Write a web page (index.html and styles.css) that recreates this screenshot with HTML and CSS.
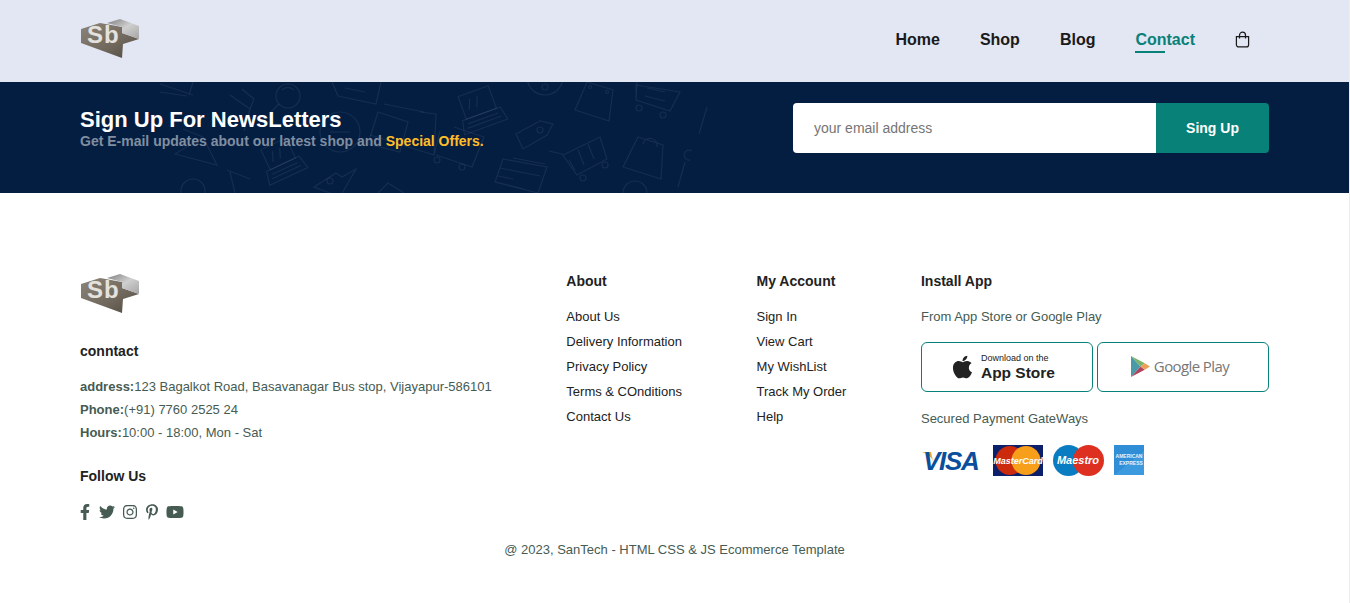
FILE: index.html
```html
<!DOCTYPE html>
<html lang="en">
<head>
    <meta charset="UTF-8">
    <meta name="viewport" content="width=device-width, initial-scale=1.0">
    <title>SanTech - Contact</title>
    <link rel="stylesheet" href="styles.css">
</head>
<body>
    <svg class="sprites" width="0" height="0" aria-hidden="true">
        <defs>
            <linearGradient id="logo-dark" x1="0" y1="0" x2="1" y2="1">
                <stop offset="0" stop-color="#8d8579"/>
                <stop offset="0.6" stop-color="#6f675b"/>
                <stop offset="1" stop-color="#4e473c"/>
            </linearGradient>
            <linearGradient id="logo-light" x1="0" y1="0" x2="1" y2="1">
                <stop offset="0" stop-color="#7d7d7d"/>
                <stop offset="0.5" stop-color="#cfcfcf"/>
                <stop offset="1" stop-color="#a5a5a5"/>
            </linearGradient>
            <symbol id="logo" viewBox="0 0 60 40">
                <polygon points="1,11 20,5 42,9 42,15 59,21 43,26 42,40 1,25" fill="url(#logo-dark)"/>
                <polygon points="27,5 40,1 59,8 59,21 42,15 42,9" fill="url(#logo-light)"/>
                <text class="logo-text" x="7" y="25">Sb</text>
            </symbol>
        </defs>
    </svg>

    <header class="topbar">
        <svg class="logo"><use href="#logo"/></svg>
        <nav class="nav">
            <a href="#">Home</a>
            <a href="#">Shop</a>
            <a href="#">Blog</a>
            <a href="#" class="active">Contact</a>
            <svg class="bag" viewBox="0 0 16 17" fill="none" stroke="#1a1a1a" stroke-width="1.3">
                <path d="M1.5 5.5h13v8.5a2.4 2.4 0 0 1-2.4 2.4H3.9A2.4 2.4 0 0 1 1.5 14z"/>
                <path d="M4.8 7.5V3.9a3.2 3.2 0 0 1 6.4 0v3.6"/>
            </svg>
        </nav>
    </header>

    <section class="newsletter">
        <svg class="pattern" viewBox="0 0 1349 111" aria-hidden="true">
            <g fill="none" stroke="#fff" stroke-opacity="0.07" stroke-width="1.2">
                <path d="M160 2l33 11M160 10l27 4M193 0l-4 13"/>
                <path d="M175 72l42 11-14-28zM203 55l-20-8"/>
                <path d="M230 13l20 14 4-10-12-10M250 27l-6 22"/>
                <path d="M181 111v-2a12 12 0 0 1 24 0v2M227 88l23 9M230 90l5 21"/>
                <circle cx="288" cy="14" r="12"/><path d="M279 22l-8 8M282 8a8 8 0 0 1 12 0"/>
                <circle cx="340" cy="50" r="20"/><path d="M330 50h20"/>
                <path d="M332 0l6 14 38 8 5-22M345 6l20 4"/>
                <path d="M378 30l30 10-8 30-32-8zM384 22l40 8"/>
                <g transform="rotate(-20 480 28)"><rect x="464" y="8" width="32" height="24"/><path d="M460 32h40l3 14h-46z"/><path d="M474 14l-4 10M482 14l-4 10M464 37h32M462 41h36"/></g>
                <g transform="rotate(-25 282 80)"><rect x="268" y="60" width="28" height="22"/><path d="M264 82h36l3 14h-42z"/><path d="M278 66l-4 10M286 66l-4 10M268 87h28M266 91h32"/></g>
                <path d="M314 105l22-14 6 4 14-8-8 14-8 14z"/><circle cx="330" cy="99" r="3"/>
                <path d="M370 53l64 20 6-24M420 30l16 2-2 41M378 111l10-10 16 10"/>
                <circle cx="437" cy="78" r="3"/><circle cx="462" cy="85" r="3"/>
                <path d="M436 73l36 12 12-30-30-10"/>
                <circle cx="545" cy="-5" r="18"/><circle cx="545" cy="5" r="3"/>
                <path d="M516 52l24-13 13 3-6 11-24 14z"/><circle cx="540" cy="48" r="3"/>
                <path d="M549 69l13 3 15 21 30-16-7-22-37 18M569 78l6 10M578 68l6 15M588 62l6 15"/>
                <circle cx="583" cy="96" r="3"/><circle cx="605" cy="83" r="3"/>
                <path d="M503 77l44 8-9 26-43-11zM513 76l32 6M500 86l40 8M498 94l15 3M496 100l28 7"/>
                <path d="M587 0l26 8-4 31-34-11z"/><circle cx="590" cy="5" r="1.5"/><circle cx="607" cy="10" r="1.5"/>
                <path d="M636 3l44 7-10 19-34-11zM637 0l-1 18M647 6l18 4M645 14l20 5"/>
                <circle cx="639" cy="26" r="3"/><circle cx="663" cy="33" r="3"/>
                <path d="M707 25l-8 27"/>
                <path d="M638 55l25 8-2 34-38-12zM643 62a7 7 0 0 1 14 3"/>
                <path d="M692 69a5 5 0 1 0-2 9M685 80l-7 25"/>
                <circle cx="635" cy="111" r="12"/>
            </g>
        </svg>
        <div class="newstext">
            <h4>Sign Up For NewsLetters</h4>
            <p>Get E-mail updates about our latest shop and <span>Special Offers.</span></p>
        </div>
        <form class="signup" onsubmit="return false">
            <input type="text" placeholder="your email address">
            <button type="submit">Sing Up</button>
        </form>
    </section>

    <footer class="footer">
        <div class="cols">
            <div class="col col-contact">
                <svg class="logo footer-logo"><use href="#logo"/></svg>
                <h4>conntact</h4>
                <p><strong>address:</strong>123 Bagalkot Road, Basavanagar Bus stop, Vijayapur-586101</p>
                <p><strong>Phone:</strong>(+91) 7760 2525 24</p>
                <p><strong>Hours:</strong>10:00 - 18:00, Mon - Sat</p>
                <h4 class="follow-title">Follow Us</h4>
                <div class="social">
                    <svg viewBox="0 0 320 512" class="ic-f"><path d="M279.14 288l14.22-92.66h-88.91v-60.13c0-25.35 12.42-50.06 52.24-50.06h40.42V6.26S260.43 0 225.36 0c-73.22 0-121.08 44.38-121.08 124.72v70.62H22.89V288h81.39v224h100.17V288z"/></svg>
                    <svg viewBox="0 0 512 512" class="ic-t"><path d="M459.37 151.716c.325 4.548.325 9.097.325 13.645 0 138.72-105.583 298.558-298.558 298.558-59.452 0-114.68-17.219-161.137-47.106 8.447.974 16.568 1.299 25.34 1.299 49.055 0 94.213-16.568 130.274-44.832-46.132-.975-84.792-31.188-98.112-72.772 6.498.974 12.995 1.624 19.818 1.624 9.421 0 18.843-1.3 27.614-3.573-48.081-9.747-84.143-51.98-84.143-102.985v-1.299c13.969 7.797 30.214 12.67 47.431 13.319-28.264-18.843-46.781-51.005-46.781-87.391 0-19.492 5.197-37.36 14.294-52.954 51.655 63.675 129.3 105.258 216.365 109.807-1.624-7.797-2.599-15.918-2.599-24.04 0-57.828 46.782-104.934 104.934-104.934 30.213 0 57.502 12.67 76.67 33.137 23.715-4.548 46.456-13.32 66.599-25.34-7.798 24.366-24.366 44.833-46.132 57.827 21.117-2.273 41.584-8.122 60.426-16.243-14.292 20.791-32.161 39.308-52.628 54.253z"/></svg>
                    <svg viewBox="0 0 448 512" class="ic-i"><path d="M224.1 141c-63.6 0-114.9 51.3-114.9 114.9s51.3 114.9 114.9 114.9S339 319.5 339 255.9 287.7 141 224.1 141zm0 189.6c-41.1 0-74.7-33.5-74.7-74.7s33.5-74.7 74.7-74.7 74.7 33.5 74.7 74.7-33.6 74.7-74.7 74.7zm146.4-194.3c0 14.9-12 26.8-26.8 26.8-14.9 0-26.8-12-26.8-26.8s12-26.8 26.8-26.8 26.8 12 26.8 26.8zm76.1 27.2c-1.7-35.9-9.9-67.7-36.2-93.9-26.2-26.2-58-34.4-93.9-36.2-37-2.1-147.9-2.1-184.9 0-35.8 1.7-67.6 9.9-93.9 36.1s-34.4 58-36.2 93.9c-2.1 37-2.1 147.9 0 184.9 1.7 35.9 9.9 67.7 36.2 93.9s58 34.4 93.9 36.2c37 2.1 147.9 2.1 184.9 0 35.9-1.7 67.7-9.9 93.9-36.2 26.2-26.2 34.4-58 36.2-93.9 2.1-37 2.1-147.8 0-184.8zM398.8 388c-7.8 19.6-22.9 34.7-42.6 42.6-29.5 11.7-99.5 9-132.1 9s-102.7 2.6-132.1-9c-19.6-7.8-34.7-22.9-42.6-42.6-11.7-29.5-9-99.5-9-132.1s-2.6-102.7 9-132.1c7.8-19.6 22.9-34.7 42.6-42.6 29.5-11.7 99.5-9 132.1-9s102.7-2.6 132.1 9c19.6 7.8 34.7 22.9 42.6 42.6 11.7 29.5 9 99.5 9 132.1s2.7 102.7-9 132.1z"/></svg>
                    <svg viewBox="0 0 384 512" class="ic-p"><path d="M204 6.5C101.4 6.5 0 74.9 0 185.6 0 256 39.6 296 63.6 296c9.9 0 15.6-27.6 15.6-35.4 0-9.3-23.7-29.1-23.7-67.8 0-80.4 61.2-137.4 140.4-137.4 68.1 0 118.5 38.7 118.5 109.8 0 53.1-21.3 152.7-90.3 152.7-24.9 0-46.2-18-46.2-43.8 0-37.8 26.4-74.4 26.4-113.4 0-66.2-93.9-54.2-93.9 25.8 0 16.8 2.1 35.4 9.6 50.7-13.8 59.4-42 147.9-42 209.1 0 18.9 2.7 37.5 4.5 56.4 3.4 3.8 1.7 3.4 6.9 1.5 50.4-69 48.6-82.5 71.4-172.8 12.3 23.4 44.1 36 69.3 36 106.2 0 153.9-103.5 153.9-196.8C384 71.3 298.2 6.5 204 6.5z"/></svg>
                    <svg viewBox="0 0 576 512" class="ic-y"><path d="M549.655 124.083c-6.281-23.65-24.787-42.276-48.284-48.597C458.781 64 288 64 288 64S117.22 64 74.629 75.486c-23.497 6.322-42.003 24.947-48.284 48.597-11.412 42.867-11.412 132.305-11.412 132.305s0 89.438 11.412 132.305c6.281 23.65 24.787 41.5 48.284 47.821C117.22 448 288 448 288 448s170.78 0 213.371-11.486c23.497-6.321 42.003-24.171 48.284-47.821 11.412-42.867 11.412-132.305 11.412-132.305s0-89.438-11.412-132.305zm-317.51 213.508V175.185l142.739 81.205-142.739 81.201z"/></svg>
                </div>
            </div>

            <div class="col">
                <h4 class="links-title">About</h4>
                <a href="#">About Us</a>
                <a href="#">Delivery Information</a>
                <a href="#">Privacy Policy</a>
                <a href="#">Terms &amp; COnditions</a>
                <a href="#">Contact Us</a>
            </div>

            <div class="col">
                <h4 class="links-title">My Account</h4>
                <a href="#">Sign In</a>
                <a href="#">View Cart</a>
                <a href="#">My WishList</a>
                <a href="#">Track My Order</a>
                <a href="#">Help</a>
            </div>

            <div class="col col-install">
                <h4 class="links-title">Install App</h4>
                <p class="install-note">From App Store or Google Play</p>
                <div class="stores">
                    <a href="#" class="store store-apple">
                        <svg viewBox="0 0 384 512" class="apple"><path d="M318.7 268.7c-.2-36.7 16.4-64.4 50-84.8-18.8-26.9-47.2-41.7-84.7-44.6-35.5-2.8-74.3 20.7-88.5 20.7-15 0-49.4-19.7-76.4-19.7C63.3 141.2 4 184.8 4 273.5q0 39.3 14.4 81.2c12.8 36.7 59 126.7 107.2 125.2 25.2-.6 43-17.9 75.8-17.9 31.8 0 48.3 17.9 74.9 17.9 48.6-.7 90.4-82.5 102.6-119.3-65.2-30.7-61.7-90-61.7-91.9zm-56.6-164.2c27.3-32.4 24.8-61.9 24-72.5-24.1 1.4-52 16.4-67.9 34.9-17.5 19.8-27.8 44.3-25.6 71.9 26.1 2 49.9-11.4 69.5-34.3z"/></svg>
                        <span class="apple-text"><small>Download on the</small><b>App Store</b></span>
                    </a>
                    <a href="#" class="store store-play">
                        <svg viewBox="0 0 20 22" class="play">
                            <polygon points="0,0 10,11 0,22" fill="#4a9aa8"/>
                            <polygon points="0,0 14.5,7.5 10,11" fill="#7cb36b"/>
                            <polygon points="0,22 14.5,14.5 10,11" fill="#b0435f"/>
                            <polygon points="14.5,7.5 20,11 14.5,14.5 10,11" fill="#eaa05a"/>
                        </svg>
                        <span class="play-text">Google Play</span>
                    </a>
                </div>
                <p class="pay-note">Secured Payment GateWays</p>
                <div class="cards">
                    <svg viewBox="0 -6 58 32" class="card-visa">
                        <path d="M1 2h9l2 9C10 6 6 4 1 2z" fill="#f0a72c"/>
                        <text class="visa-text" x="2" y="20">VISA</text>
                    </svg>
                    <svg viewBox="0 0 50 31" class="card-mc">
                        <rect width="50" height="31" fill="#0b1f6a"/>
                        <circle cx="17" cy="15.5" r="14.5" fill="#cc2a0c"/>
                        <circle cx="33" cy="15.5" r="14.5" fill="#f79e1b"/>
                        <text class="mc-text" x="25" y="18.5">MasterCard</text>
                    </svg>
                    <svg viewBox="0 0 51 31" class="card-maestro">
                        <circle cx="15.5" cy="15.5" r="15.5" fill="#0a7cc1"/>
                        <circle cx="35.5" cy="15.5" r="15.5" fill="#dd3020"/>
                        <text class="mc-text maestro" x="25" y="19">Maestro</text>
                    </svg>
                    <svg viewBox="0 0 30 30" class="card-amex">
                        <rect width="30" height="30" fill="#2f8ed6"/>
                        <path d="M0 30L30 6v24z" fill="#4aa5e6" opacity="0.5"/>
                        <text class="amex-text" x="15" y="13">AMERICAN</text>
                        <text class="amex-text" x="17" y="20">EXPRESS</text>
                    </svg>
                </div>
            </div>
        </div>
        <p class="copyright">@ 2023, SanTech - HTML CSS &amp; JS Ecommerce Template</p>
    </footer>
</body>
</html>
```

FILE: styles.css
```css
* {
    box-sizing: border-box;
    margin: 0;
    padding: 0;
}

html, body {
    height: 603px;
    overflow: hidden;
}

body {
    font-family: "Liberation Sans", Arial, sans-serif;
    background: #fff;
    color: #222;
    border-right: 1px solid #ececec;
}

a {
    text-decoration: none;
    color: inherit;
}

.sprites {
    position: absolute;
}

/* top bar */
.topbar {
    display: flex;
    align-items: center;
    justify-content: space-between;
    height: 82px;
    padding: 0 80px;
    background: #e3e6f3;
}

.logo {
    display: block;
    width: 60px;
    height: 40px;
    margin-top: -6px;
}

.logo-text {
    font-family: "Liberation Sans", sans-serif;
    font-size: 24px;
    font-weight: 700;
    letter-spacing: 1px;
    fill: #e4e2de;
}

.nav {
    display: flex;
    align-items: center;
    gap: 40px;
    padding-right: 19px;
    margin-top: -3px;
}

.nav a {
    position: relative;
    font-size: 16px;
    font-weight: 600;
    color: #1a1a1a;
}

.nav a.active {
    color: #088178;
}

.nav a.active::after {
    content: "";
    position: absolute;
    left: 0;
    bottom: -4px;
    width: 30px;
    height: 2px;
    background: #088178;
}

.bag {
    width: 15px;
    height: 17px;
}

/* newsletter */
.newsletter {
    position: relative;
    display: flex;
    align-items: flex-start;
    justify-content: space-between;
    height: 111px;
    padding: 21px 80px 0;
    background: #041e42;
    overflow: hidden;
}

.pattern {
    position: absolute;
    left: 0;
    top: 0;
    width: 1349px;
    height: 111px;
}

.newstext,
.signup {
    position: relative;
}

.newstext {
    padding-top: 5px;
}

.newstext h4 {
    font-size: 22px;
    font-weight: 700;
    line-height: 24px;
    color: #fff;
}

.newstext p {
    margin-top: 1px;
    font-size: 14px;
    font-weight: 600;
    line-height: 16px;
    color: #818ea0;
}

.newstext span {
    color: #ffbd27;
}

.signup {
    display: flex;
    width: 476px;
    height: 50px;
}

.signup input {
    flex: 1;
    height: 100%;
    min-width: 0;
    padding: 0 21px;
    border: 0;
    outline: 0;
    border-radius: 4px 0 0 4px;
    font: 14px "Liberation Sans", Arial, sans-serif;
}

.signup input::placeholder {
    color: #757575;
}

.signup button {
    width: 113px;
    height: 100%;
    border: 0;
    border-radius: 0 4px 4px 0;
    background: #088178;
    color: #fff;
    font: 700 14px "Liberation Sans", Arial, sans-serif;
}

/* footer */
.footer {
    padding: 80px 80px 0;
}

.cols {
    display: flex;
    justify-content: space-between;
}

.col {
    display: flex;
    flex-direction: column;
    align-items: flex-start;
}

.col h4 {
    font-size: 14px;
    font-weight: 700;
    line-height: 16px;
    color: #222;
}

.col > a {
    font-size: 13px;
    line-height: 25px;
    color: #222;
}

.links-title {
    margin-bottom: 15px;
}

.footer-logo {
    margin-top: 0;
    margin-bottom: 30px;
}

.col-contact h4 {
    margin-bottom: 16px;
}

.col-contact p {
    font-size: 13px;
    line-height: 23px;
    color: #465b52;
    white-space: nowrap;
}

.col-contact strong {
    font-weight: 700;
}

.col-contact .follow-title {
    margin-top: 24px;
}

.social {
    display: flex;
    align-items: center;
    gap: 8.5px;
    margin-top: 4px;
}

.social svg {
    display: block;
    height: 16px;
    fill: #465b52;
}

.ic-f { width: 10px; }
.ic-t { width: 16px; }
.ic-i { width: 14px; }
.ic-p { width: 12px; }
.ic-y { width: 18px; }

.install-note,
.pay-note {
    font-size: 13px;
    color: #465b52;
}

.install-note {
    line-height: 25px;
}

.pay-note {
    line-height: 20px;
}

.stores {
    display: flex;
    gap: 4px;
    margin: 13px 0 17px;
}

.store {
    display: flex;
    align-items: center;
    justify-content: center;
    width: 172px;
    height: 50px;
    border: 1px solid #088178;
    border-radius: 6px;
}

.store-apple {
    padding-right: 7px;
}

.store-play {
    padding: 0 6px 2px 0;
}

.apple {
    width: 21px;
    height: 26px;
    margin-right: 8px;
    fill: #222;
}

.apple-text {
    display: flex;
    flex-direction: column;
    color: #222;
}

.apple-text small {
    font-size: 9px;
    line-height: 11.5px;
}

.apple-text b {
    font-size: 15.5px;
    font-weight: 700;
    line-height: 17.5px;
}

.play {
    width: 19px;
    height: 21px;
    margin-right: 4px;
}

.play-text {
    font-family: "Open Sans", sans-serif;
    font-size: 15px;
    color: #777;
    letter-spacing: -0.6px;
}

.cards {
    display: flex;
    align-items: center;
    gap: 10px;
    margin-top: 15px;
}

.cards svg {
    display: block;
}

.card-visa {
    width: 58px;
    height: 32px;
    margin-right: 4px;
}

.card-mc {
    width: 50px;
    height: 31px;
}

.card-maestro {
    width: 51px;
    height: 31px;
}

.card-amex {
    width: 30px;
    height: 30px;
}

.visa-text {
    font-family: "Liberation Sans", sans-serif;
    font-size: 26px;
    font-weight: 700;
    font-style: italic;
    letter-spacing: -1.3px;
    fill: #0b4f9c;
}

.mc-text {
    font-family: "Liberation Sans", sans-serif;
    font-size: 9px;
    font-weight: 700;
    font-style: italic;
    fill: #fff;
    text-anchor: middle;
}

.mc-text.maestro {
    font-size: 11px;
}

.amex-text {
    font-family: "Liberation Sans", sans-serif;
    font-size: 5px;
    font-weight: 700;
    fill: #e8f3fb;
    text-anchor: middle;
}

.copyright {
    margin-top: 22px;
    font-size: 13px;
    line-height: 16px;
    text-align: center;
    color: #465b52;
}
```
